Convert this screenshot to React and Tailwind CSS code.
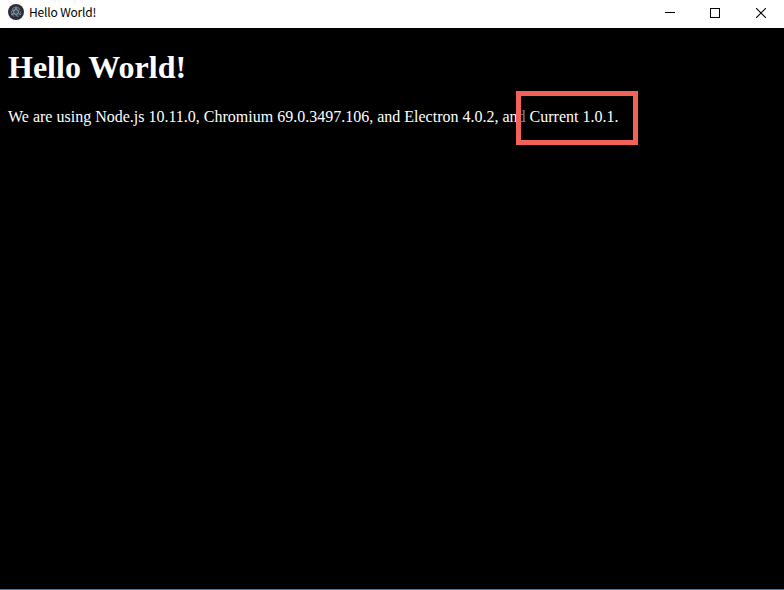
function ElectronIcon() {
  return (
    <svg className="h-4 w-4 shrink-0" viewBox="0 0 16 16" fill="none">
      <circle cx="8" cy="8" r="8" fill="#2b2e3a" />
      <g stroke="#9fbcc6" strokeWidth="0.6" strokeLinecap="round" strokeDasharray="19 4">
        <ellipse cx="8" cy="8" rx="5" ry="2.1" />
        <ellipse cx="8" cy="8" rx="5" ry="2.1" transform="rotate(60 8 8)" />
        <ellipse cx="8" cy="8" rx="5" ry="2.1" transform="rotate(120 8 8)" />
      </g>
      <g fill="#9fbcc6">
        <circle cx="8" cy="8" r="0.6" />
        <circle cx="3.9" cy="10.4" r="0.7" />
        <circle cx="12.2" cy="10.4" r="0.7" />
        <circle cx="8" cy="3" r="0.7" />
      </g>
    </svg>
  );
}

function TitleBar() {
  return (
    <header className="flex h-7 shrink-0 items-start bg-white pl-2 text-black">
      <div className="flex flex-1 items-center gap-[5px] pt-1">
        <ElectronIcon />
        <span className="font-['Noto_Sans_CJK_KR','Noto_Sans',sans-serif] text-[12px] leading-4 tracking-[-0.17px] whitespace-nowrap">
          Hello World!
        </span>
      </div>
      <div className="flex items-center gap-[35px] pt-[7px] pr-[18px]">
        <svg className="h-[11px] w-[10px]" viewBox="0 0 10 11" shapeRendering="crispEdges">
          <path d="M0 5h10v1H0z" fill="currentColor" />
        </svg>
        <svg className="h-[10px] w-[10px]" viewBox="0 0 10 10" fill="none" shapeRendering="crispEdges">
          <rect x="0.5" y="0.5" width="9" height="9" stroke="currentColor" />
        </svg>
        <svg className="ml-px h-[10px] w-[10px]" viewBox="0 0 10 10" fill="none">
          <path d="M0 0l10 10M10 0L0 10" stroke="currentColor" strokeWidth="1.1" />
        </svg>
      </div>
    </header>
  );
}

export default function App() {
  return (
    <div className="flex h-[590px] w-[784px] flex-col overflow-hidden border-b border-[#3b7dbf] bg-black">
      <TitleBar />
      <main className="relative flex-1 px-2 pt-[21px] font-['Liberation_Serif','Times_New_Roman',serif] text-white">
        <h1 className="text-[32px] leading-[37px] font-bold">Hello World!</h1>
        <p className="mt-[22px] text-[16px] leading-[18px] whitespace-nowrap">
          We are using Node.js 10.11.0, Chromium 69.0.3497.106, and Electron 4.0.2, and Current 1.0.1.
        </p>
        <div className="absolute top-[63px] left-[516px] h-[54px] w-[122px] border-[5px] border-[#f26256]">
          <div className="h-full w-[5px] bg-black/50" />
        </div>
      </main>
    </div>
  );
}
